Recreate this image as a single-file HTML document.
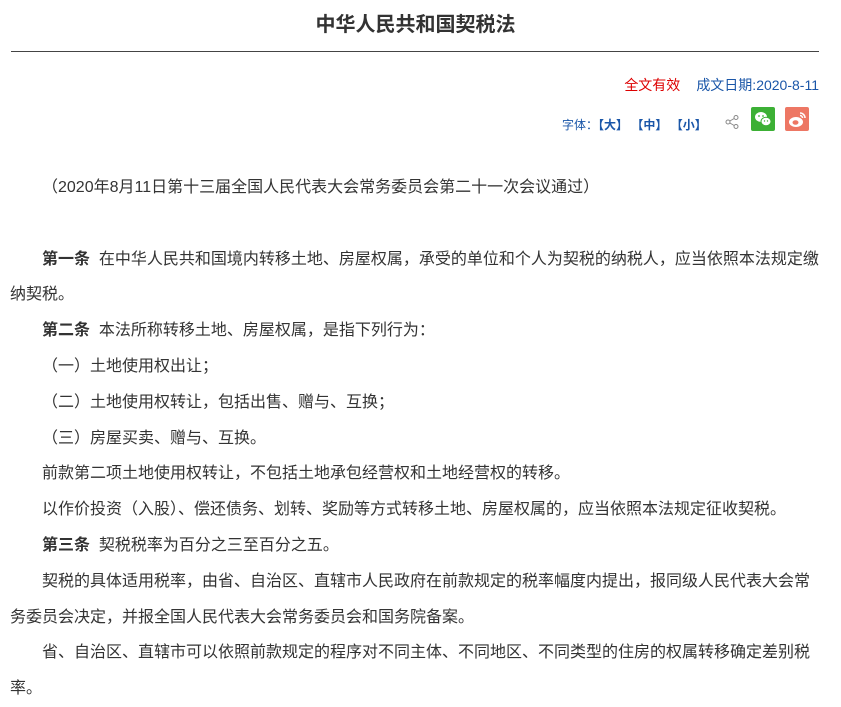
<!DOCTYPE html>
<html><head><meta charset="utf-8"><style>
body{margin:0;background:#fff;font-family:"Liberation Sans","Noto Sans CJK SC",sans-serif;color:#333;}
.t{position:absolute;left:0;width:831px;text-align:center;top:12px;font-size:20px;font-weight:bold;line-height:26px;color:#333}
.hr{position:absolute;left:11px;width:808px;top:51px;height:1px;background:#444}
.meta{position:absolute;right:22px;top:75px;font-size:14px;line-height:20px}
.fs{position:absolute;left:562px;top:116px;font-size:12px;color:#1a56a8;line-height:18px}
.c{position:absolute;left:10px;width:812px;top:170px;font-size:16px;line-height:35.8px}
.c p{margin:0;text-indent:32px}
b{color:#333}
</style></head><body>
<div class="t">中华人民共和国契税法</div>
<div class="hr"></div>
<div class="meta"><span style="color:#d00;margin-right:16px">全文有效</span><span style="color:#1a56a8">成文日期:2020-8-11</span></div>
<div class="fs">字体：<b style="color:#1a56a8">【大】</b> <b style="color:#1a56a8">【中】</b> <b style="color:#1a56a8">【小】</b></div>
<svg style="position:absolute;left:724px;top:114px" width="16" height="16" viewBox="0 0 16 16"><g fill="none" stroke="#888" stroke-width="1"><circle cx="4" cy="8" r="2"/><circle cx="12" cy="3.5" r="2"/><circle cx="12" cy="12.5" r="2"/><path d="M5.8 7 10.2 4.5M5.8 9 10.2 11.5"/></g></svg>
<svg style="position:absolute;left:751px;top:107px" width="24" height="24" viewBox="0 0 24 24"><rect width="24" height="24" rx="2" fill="#3cb035"/><ellipse cx="10" cy="10" rx="6" ry="5" fill="#fff"/><ellipse cx="15" cy="14.5" rx="5" ry="4.2" fill="#fff" stroke="#3cb035" stroke-width="1"/><circle cx="8" cy="9" r=".9" fill="#3cb035"/><circle cx="12" cy="9" r=".9" fill="#3cb035"/><circle cx="13.5" cy="14" r=".7" fill="#3cb035"/><circle cx="16.5" cy="14" r=".7" fill="#3cb035"/></svg>
<svg style="position:absolute;left:785px;top:107px" width="24" height="24" viewBox="0 0 24 24"><rect width="24" height="24" rx="2" fill="#ed7764"/><ellipse cx="11" cy="15" rx="7" ry="5" fill="#fff"/><ellipse cx="10.5" cy="15.5" rx="3" ry="2.3" fill="#ed7764"/><path d="M15 6a5 5 0 0 1 5 5M15 8.5a2.5 2.5 0 0 1 2.5 2.5" stroke="#fff" stroke-width="1.5" fill="none"/></svg>
<div class="c">
<p>（2020年8月11日第十三届全国人民代表大会常务委员会第二十一次会议通过）</p>
<p>&nbsp;</p>
<p><b>第一条</b>&nbsp; 在中华人民共和国境内转移土地、房屋权属，承受的单位和个人为契税的纳税人，应当依照本法规定缴纳契税。</p>
<p><b>第二条</b>&nbsp; 本法所称转移土地、房屋权属，是指下列行为：</p>
<p>（一）土地使用权出让；</p>
<p>（二）土地使用权转让，包括出售、赠与、互换；</p>
<p>（三）房屋买卖、赠与、互换。</p>
<p>前款第二项土地使用权转让，不包括土地承包经营权和土地经营权的转移。</p>
<p>以作价投资（入股）、偿还债务、划转、奖励等方式转移土地、房屋权属的，应当依照本法规定征收契税。</p>
<p><b>第三条</b>&nbsp; 契税税率为百分之三至百分之五。</p>
<p>契税的具体适用税率，由省、自治区、直辖市人民政府在前款规定的税率幅度内提出，报同级人民代表大会常务委员会决定，并报全国人民代表大会常务委员会和国务院备案。</p>
<p>省、自治区、直辖市可以依照前款规定的程序对不同主体、不同地区、不同类型的住房的权属转移确定差别税率。</p>
</div>
</body></html>
